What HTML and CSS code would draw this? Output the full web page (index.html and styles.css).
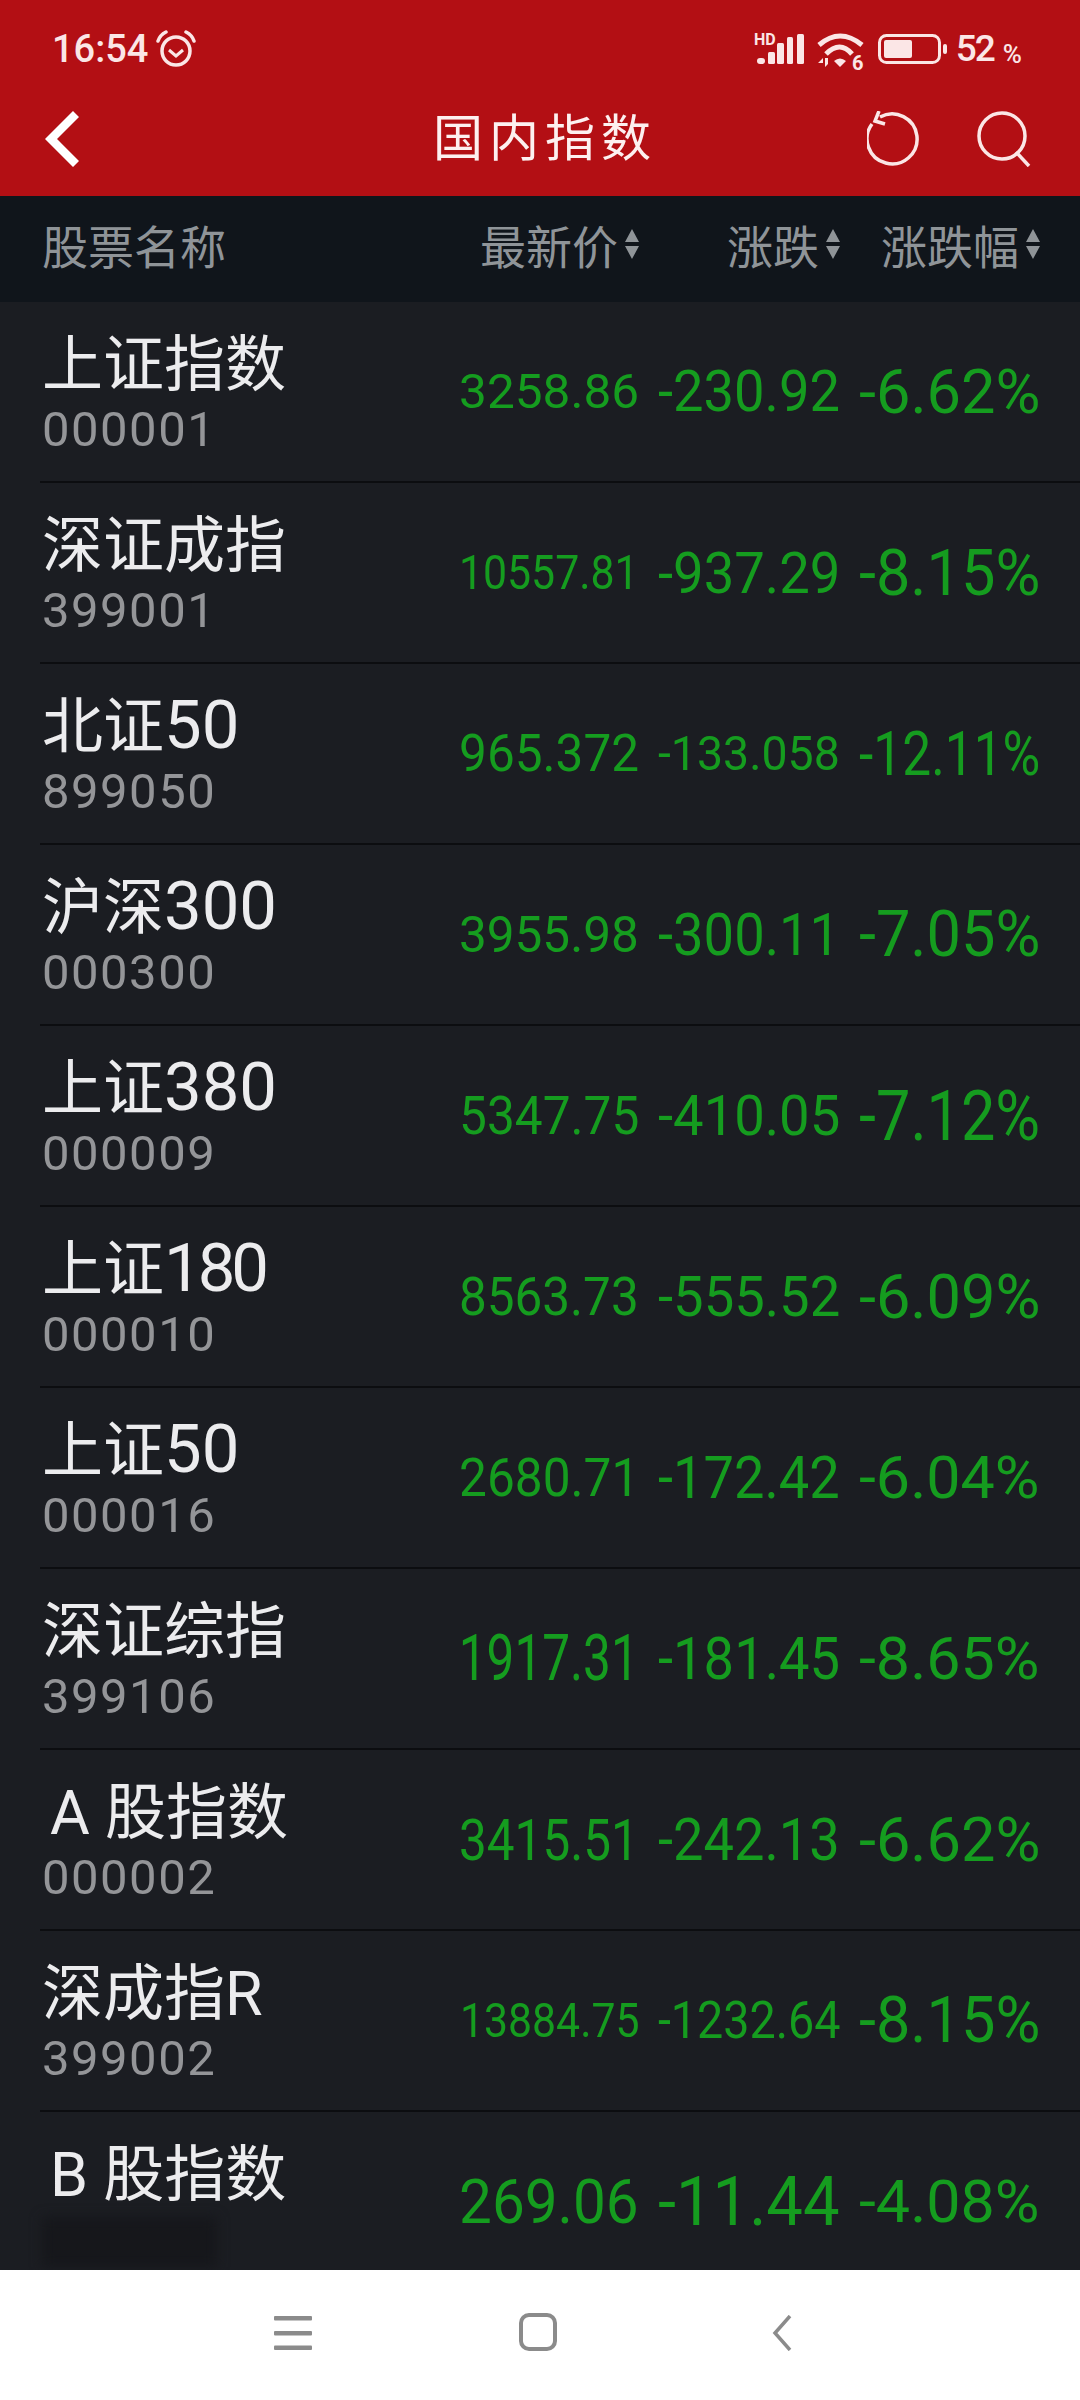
FILE: index.html
```html
<!DOCTYPE html>
<html lang="zh-CN">
<head>
    <meta charset="UTF-8">
    <meta name="viewport" content="width=device-width, initial-scale=1.0">
    <title>国内指数</title>
    <link rel="stylesheet" href="styles.css">
</head>
<body>
<div class="app">
    <div class="top">
        <div class="status">
            <span class="time">16:54</span>
            <svg class="alarm" viewBox="0 0 40 38" fill="none" stroke="#fbe6e6">
                <circle cx="20" cy="21" r="14" stroke-width="3.5"/>
                <path d="M13 20l7 6 7-6" stroke-width="3"/>
                <path d="M2 11Q4 5 10 2M38 11Q36 5 30 2" stroke-width="3.5" stroke-linecap="round"/>
            </svg>
            <div class="status-right">
                <svg class="signal" viewBox="0 0 50 38">
                    <text x="0" y="15" class="hd">HD</text>
                    <rect x="3" y="28" width="8" height="6" rx="3"/>
                    <rect x="14" y="22" width="7" height="12" rx="1.5"/>
                    <rect x="23" y="13" width="7" height="21" rx="1.5"/>
                    <rect x="33" y="7" width="6" height="27" rx="1.5"/>
                    <rect x="43" y="4" width="7" height="30" rx="1.5"/>
                </svg>
                <svg class="wifi" viewBox="0 0 48 44">
                    <g fill="none" stroke="#fbe6e6" stroke-width="5">
                        <path d="M2 15Q23 -3 45 15"/>
                        <path d="M9 24Q23 10 35 24"/>
                    </g>
                    <path d="M17 31Q23 26 29 31l-6 6z" fill="#fbe6e6"/>
                    <path d="M1 33h5v-5zM8 28v9l3-3v-6z" fill="#fbe6e6"/>
                    <text x="35" y="40" class="six">6</text>
                </svg>
                <svg class="battery" viewBox="0 0 70 38">
                    <rect x="1.5" y="5.5" width="60" height="27" rx="7" fill="none" stroke="#fbe6e6" stroke-width="3"/>
                    <rect x="6" y="10" width="28" height="18" rx="2" fill="#fbe6e6"/>
                    <rect x="65" y="14" width="4" height="10" rx="2" fill="#fbe6e6"/>
                </svg>
                <span class="pct-num">52</span><span class="pct-sign">%</span>
            </div>
        </div>
        <div class="nav">
            <svg class="back" viewBox="0 0 34 56" fill="none" stroke="#fff" stroke-width="8.5">
                <path d="M31 3L6 28l25 25"/>
            </svg>
            <div class="title">国内指数</div>
            <div class="nav-right">
                <svg class="nav-icon" viewBox="0 0 54 56" fill="none" stroke="#fbe6e6" stroke-width="3.5">
                    <path d="M13 6A25 25 0 1 1 5 13"/>
                    <path d="M12 0L8 10l10 3"/>
                </svg>
                <svg class="nav-icon" viewBox="0 0 54 56" fill="none" stroke="#fbe6e6" stroke-width="3.5">
                    <circle cx="25" cy="25" r="23"/>
                    <path d="M39 41l13 14"/>
                </svg>
            </div>
        </div>
    </div>

    <div class="table-head">
        <div class="head-name">股票名称</div>
        <div class="head-col">最新价<svg class="sort" viewBox="0 0 14 30"><path d="M7 0l7 13H0zM7 30L0 17h14z"/></svg></div>
        <div class="head-col">涨跌<svg class="sort" viewBox="0 0 14 30"><path d="M7 0l7 13H0zM7 30L0 17h14z"/></svg></div>
        <div class="head-col">涨跌幅<svg class="sort" viewBox="0 0 14 30"><path d="M7 0l7 13H0zM7 30L0 17h14z"/></svg></div>
    </div>

    <div class="list">
        <div class="row">
            <div class="stock"><div class="name">上证指数</div><div class="code">000001</div></div>
            <div class="cell"><span class="num fs49">3258.86</span></div>
            <div class="cell"><span class="num fs57">-230.92</span></div>
            <div class="cell"><span class="num fs62">-6.62%</span></div>
        </div>
        <div class="row">
            <div class="stock"><div class="name">深证成指</div><div class="code">399001</div></div>
            <div class="cell"><span class="num fs49">10557.81</span></div>
            <div class="cell"><span class="num fs58">-937.29</span></div>
            <div class="cell"><span class="num fs65">-8.15%</span></div>
        </div>
        <div class="row">
            <div class="stock"><div class="name">北证<span class="name-num">50</span></div><div class="code">899050</div></div>
            <div class="cell"><span class="num fs52">965.372</span></div>
            <div class="cell"><span class="num fs48">-133.058</span></div>
            <div class="cell"><span class="num fs62">-12.11%</span></div>
        </div>
        <div class="row">
            <div class="stock"><div class="name">沪深<span class="name-num">300</span></div><div class="code">000300</div></div>
            <div class="cell"><span class="num fs50">3955.98</span></div>
            <div class="cell"><span class="num fs60">-300.11</span></div>
            <div class="cell"><span class="num fs64">-7.05%</span></div>
        </div>
        <div class="row">
            <div class="stock"><div class="name">上证<span class="name-num">380</span></div><div class="code">000009</div></div>
            <div class="cell"><span class="num fs54">5347.75</span></div>
            <div class="cell"><span class="num fs55">-410.05</span></div>
            <div class="cell"><span class="num fs70">-7.12%</span></div>
        </div>
        <div class="row">
            <div class="stock"><div class="name">上证<span class="name-num name-num-tight">180</span></div><div class="code">000010</div></div>
            <div class="cell"><span class="num fs53">8563.73</span></div>
            <div class="cell"><span class="num fs55">-555.52</span></div>
            <div class="cell"><span class="num fs61">-6.09%</span></div>
        </div>
        <div class="row">
            <div class="stock"><div class="name">上证<span class="name-num">50</span></div><div class="code">000016</div></div>
            <div class="cell"><span class="num fs54">2680.71</span></div>
            <div class="cell"><span class="num fs59">-172.42</span></div>
            <div class="cell"><span class="num fs60">-6.04%</span></div>
        </div>
        <div class="row">
            <div class="stock"><div class="name">深证综指</div><div class="code">399106</div></div>
            <div class="cell"><span class="num fs64">1917.31</span></div>
            <div class="cell"><span class="num fs60">-181.45</span></div>
            <div class="cell"><span class="num fs60">-8.65%</span></div>
        </div>
        <div class="row">
            <div class="stock"><div class="name name-inset">A 股指数</div><div class="code">000002</div></div>
            <div class="cell"><span class="num fs58">3415.51</span></div>
            <div class="cell"><span class="num fs59">-242.13</span></div>
            <div class="cell"><span class="num fs61">-6.62%</span></div>
        </div>
        <div class="row">
            <div class="stock"><div class="name">深成指R</div><div class="code">399002</div></div>
            <div class="cell"><span class="num fs48">13884.75</span></div>
            <div class="cell"><span class="num fs52">-1232.64</span></div>
            <div class="cell"><span class="num fs64">-8.15%</span></div>
        </div>
        <div class="row">
            <div class="stock"><div class="name name-inset">B 股指数</div><div class="code-hidden"></div></div>
            <div class="cell"><span class="num fs62">269.06</span></div>
            <div class="cell"><span class="num fs68">-11.44</span></div>
            <div class="cell"><span class="num fs60">-4.08%</span></div>
        </div>
    </div>

    <div class="bottom-bar">
        <svg class="sys-menu" viewBox="0 0 38 34" fill="#8b8b8b">
            <rect x="0" y="0" width="38" height="4.5" rx="1"/>
            <rect x="0" y="15" width="38" height="4.5" rx="1"/>
            <rect x="0" y="29.5" width="38" height="4.5" rx="1"/>
        </svg>
        <svg class="sys-home" viewBox="0 0 38 38" fill="none" stroke="#8b8b8b" stroke-width="4">
            <rect x="2" y="2" width="34" height="34" rx="8"/>
        </svg>
        <svg class="sys-back" viewBox="0 0 20 36" fill="none" stroke="#8b8b8b" stroke-width="3.5">
            <path d="M18 1L3 18l15 17"/>
        </svg>
    </div>
</div>
<script src="fit.js"></script>
</body>
</html>
```

FILE: styles.css
```css
* {
    box-sizing: border-box;
}
html, body {
    margin: 0;
    padding: 0;
}
body {
    font-family: Roboto, "Noto Sans CJK SC", sans-serif;
    background-color: #1b1d22;
}
.app {
    width: 1080px;
    height: 2400px;
    display: flex;
    flex-direction: column;
    overflow: hidden;
}

/* red header */
.top {
    height: 196px;
    background-color: #b30f14;
    color: #fbe6e6;
}
.status {
    height: 82px;
    padding: 30px 58px 0 52px;
    display: flex;
    align-items: flex-start;
}
.time {
    font-size: 38px;
    line-height: 38px;
    font-weight: 500;
}
.alarm {
    width: 40px;
    height: 38px;
    margin-left: 8px;
}
.status-right {
    margin-left: auto;
    display: flex;
    align-items: flex-start;
}
.signal {
    width: 50px;
    height: 38px;
    fill: #fbe6e6;
}
.hd {
    font-size: 16px;
    font-weight: 700;
}
.wifi {
    width: 48px;
    height: 44px;
    margin-left: 13px;
}
.six {
    font-size: 20px;
    font-weight: 700;
    fill: #fbe6e6;
}
.battery {
    width: 70px;
    height: 38px;
    margin-left: 13px;
}
.pct-num {
    margin-left: 8px;
    font-size: 37px;
    line-height: 38px;
    font-weight: 500;
    letter-spacing: -2px;
}
.pct-sign {
    margin-left: 9px;
    padding-top: 10px;
    font-size: 26px;
    line-height: 28px;
    font-weight: 500;
}
.nav {
    height: 114px;
    padding: 0 35px 0 45px;
    display: grid;
    grid-template-columns: 1fr auto 1fr;
    align-items: center;
}
.back {
    width: 34px;
    height: 56px;
}
.title {
    font-size: 50px;
    line-height: 60px;
    letter-spacing: 6px;
    color: #fdf0f0;
}
.nav-right {
    display: flex;
    justify-content: flex-end;
    gap: 56px;
    margin-right: 14px;
}
.nav-icon {
    width: 54px;
    height: 56px;
}

/* table */
.table-head {
    height: 106px;
    padding-left: 42px;
    padding-right: 40px;
    padding-bottom: 10px;
    background-color: #10151b;
    color: #8f9498;
    font-size: 46px;
    display: grid;
    grid-template-columns: 1fr 180px 182px 181px;
    column-gap: 19px;
    align-items: center;
}
.head-col {
    display: flex;
    justify-content: flex-end;
    align-items: center;
    white-space: nowrap;
}
.sort {
    width: 14px;
    height: 30px;
    margin-left: 7px;
    fill: #8f9498;
}
.list {
    flex: 1;
    overflow: hidden;
}
.row {
    height: 181px;
    margin-left: 40px;
    padding-right: 40px;
    border-bottom: 2px solid #0c0d10;
    display: grid;
    grid-template-columns: 1fr 180px 182px 181px;
    column-gap: 19px;
    align-items: center;
}
.stock {
    align-self: start;
    padding-top: 31px;
    padding-left: 2px;
}
.name {
    font-size: 61px;
    line-height: 64px;
    color: #ececee;
    white-space: nowrap;
}
.name-num {
    font-size: 67px;
    line-height: 0;
}
.name-num-tight {
    letter-spacing: -4px;
}
.name-inset {
    padding-left: 8px;
}
.code {
    font-size: 49px;
    line-height: 66px;
    letter-spacing: 1.5px;
    color: #949598;
}
.code-hidden {
    width: 175px;
    height: 50px;
    margin-top: 10px;
    background-color: #16171b;
    filter: blur(6px);
}
.cell {
    display: flex;
    justify-content: flex-end;
    color: #159c1f;
}
.num {
    flex-shrink: 0;
    white-space: nowrap;
    transform-origin: right center;
}

/* sizes the app picks per value so it fits the column */
.fs48 { font-size: 48px; }
.fs49 { font-size: 49px; }
.fs50 { font-size: 50px; }
.fs52 { font-size: 52px; }
.fs53 { font-size: 53px; }
.fs54 { font-size: 54px; }
.fs55 { font-size: 55px; }
.fs57 { font-size: 57px; }
.fs58 { font-size: 58px; }
.fs59 { font-size: 59px; }
.fs60 { font-size: 60px; }
.fs61 { font-size: 61px; }
.fs62 { font-size: 62px; }
.fs64 { font-size: 64px; }
.fs65 { font-size: 65px; }
.fs68 { font-size: 68px; }
.fs70 { font-size: 70px; }

/* system bar */
.bottom-bar {
    height: 130px;
    background-color: #fff;
    flex-shrink: 0;
    padding: 43px 0 0 274px;
    display: flex;
    align-items: flex-start;
}
.sys-menu {
    width: 38px;
    height: 34px;
    margin-top: 3px;
}
.sys-home {
    width: 38px;
    height: 38px;
    margin-left: 207px;
}
.sys-back {
    width: 20px;
    height: 36px;
    margin-left: 215px;
    margin-top: 2px;
}
```

FILE: fit.js
```js
// squeeze each number to its column width, same as the app's autosize
document.querySelectorAll(".num").forEach(function (num) {
    var target = num.parentElement.clientWidth;
    num.style.transform = "scaleX(" + (target / num.offsetWidth).toFixed(3) + ")";
});
```
